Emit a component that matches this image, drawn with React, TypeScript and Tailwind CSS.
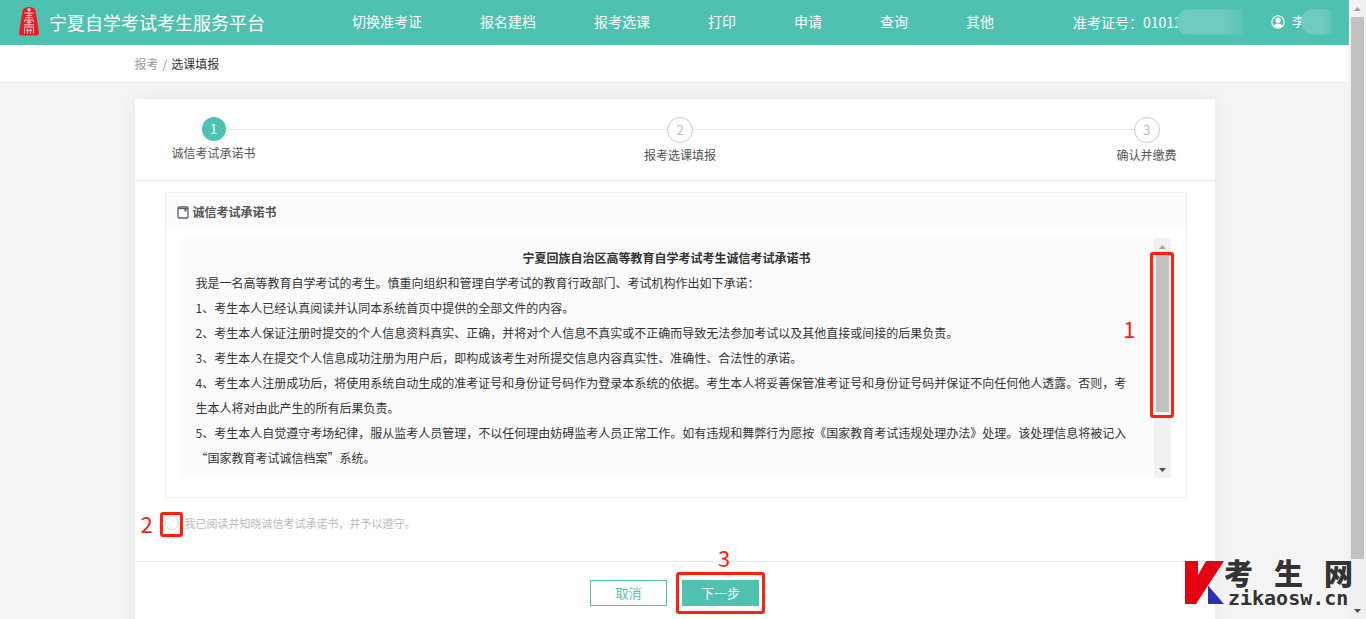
import type { ReactNode } from "react";

const navLinks = ["切换准考证", "报名建档", "报考选课", "打印", "申请", "查询", "其他"];

const steps = ["诚信考试承诺书", "报考选课填报", "确认并缴费"];

const pledge = [
  "我是一名高等教育自学考试的考生。慎重向组织和管理自学考试的教育行政部门、考试机构作出如下承诺：",
  "1、考生本人已经认真阅读并认同本系统首页中提供的全部文件的内容。",
  "2、考生本人保证注册时提交的个人信息资料真实、正确，并将对个人信息不真实或不正确而导致无法参加考试以及其他直接或间接的后果负责。",
  "3、考生本人在提交个人信息成功注册为用户后，即构成该考生对所提交信息内容真实性、准确性、合法性的承诺。",
  "4、考生本人注册成功后，将使用系统自动生成的准考证号和身份证号码作为登录本系统的依据。考生本人将妥善保管准考证号和身份证号码并保证不向任何他人透露。否则，考生本人将对由此产生的所有后果负责。",
  "5、考生本人自觉遵守考场纪律，服从监考人员管理，不以任何理由妨碍监考人员正常工作。如有违规和舞弊行为愿按《国家教育考试违规处理办法》处理。该处理信息将被记入“国家教育考试诚信档案”系统。",
];

function SealLogo() {
  return (
    <svg width="20" height="29" viewBox="0 0 20 29" aria-hidden="true">
      <path d="M3.5 3.5 Q4.5 0 10 0 Q15.5 0 16.5 3.5 L20 26 Q20 28.5 18 28.5 H2 Q0 28.5 0 26 Z" fill="#ed1c24" />
      <circle cx="10" cy="2.8" r="1.6" fill="#fff" />
      <path
        d="M5.5 6H14.5M7 8.5H13M6 10.7H14M10 6V12.5M5.5 13H14.5M5.5 13V15.2M14.5 13V15.2M7.5 15.2H12.5M5 17.8H15M10 13V19.8M5.5 20V26.6M5.5 20H14.5V26.6M8.5 21.5V26.6M11.5 21.5V26.6M7 23.3H13"
        stroke="#ffd0d0"
        strokeWidth="1"
        fill="none"
      />
    </svg>
  );
}

function UserIcon() {
  return (
    <svg width="14" height="14" viewBox="0 0 14 14" aria-hidden="true">
      <circle cx="7" cy="7" r="6.2" fill="none" stroke="#fff" strokeWidth="1.1" />
      <circle cx="7" cy="5.2" r="2.6" fill="#fff" />
      <path d="M2.6 10.6 Q4 8.5 7 8.5 Q10 8.5 11.4 10.6 Q9.8 12.8 7 12.8 Q4.2 12.8 2.6 10.6Z" fill="#fff" />
    </svg>
  );
}

function NoteIcon() {
  return (
    <svg width="12" height="13" viewBox="0 0 12 13" aria-hidden="true">
      <rect x="1" y="1" width="10" height="11" rx="1" fill="none" stroke="#5f5f6e" strokeWidth="1.3" />
      <path d="M1 2.6H11" stroke="#5f5f6e" strokeWidth="1.2" />
      <path d="M7.5 3H9.5V6L8.5 5.2L7.5 6Z" fill="#5f5f6e" />
    </svg>
  );
}

function ArrowButton({ label, down, dark }: { label: string; down?: boolean; dark?: boolean }) {
  return (
    <button aria-label={label} className="flex h-[17px] w-[17px] shrink-0 items-center justify-center">
      <svg width="7" height="4" viewBox="0 0 7 4" aria-hidden="true">
        <path d={down ? "M0 0H7L3.5 4Z" : "M0 4H7L3.5 0Z"} fill={dark ? "#505050" : "#a3a3a3"} />
      </svg>
    </button>
  );
}

function ScrollBar({ children }: { children: ReactNode }) {
  return (
    <div className="flex w-[17px] shrink-0 flex-col items-center bg-[#f1f1f1]">
      <ArrowButton label="向上滚动" />
      <div className="flex w-full flex-1 flex-col items-center">{children}</div>
      <ArrowButton label="向下滚动" down dark />
    </div>
  );
}

function Header() {
  return (
    <header className="flex h-[45px] items-center bg-[#4fc1b1] pr-[17px] pb-0.5 pl-[19px] text-sm text-white">
      <SealLogo />
      <h1 className="ml-2.5 text-lg whitespace-nowrap">宁夏自学考试考生服务平台</h1>
      <nav className="ml-[87px] flex gap-[58px] pb-0.5 whitespace-nowrap">
        {navLinks.map((name) => (
          <a key={name} href="#">
            {name}
          </a>
        ))}
      </nav>
      <div className="ml-auto flex items-center whitespace-nowrap">
        <span className="relative w-[170px]">
          准考证号：01012
          <MaskBlock className="right-0 h-[25px] w-[67px]" />
        </span>
        <a href="#" className="relative ml-7 flex w-[61px] items-center gap-[7px] text-[13px]">
          <UserIcon />
          李
          <MaskBlock className="right-0 h-[25px] w-[31px]" />
        </a>
      </div>
    </header>
  );
}

function MaskBlock({ className }: { className: string }) {
  return (
    <span
      className={`absolute top-1/2 -translate-y-1/2 rounded-l-full bg-linear-to-r from-[#6fcbbe] from-70% to-[#58c4b5] ${className}`}
    />
  );
}

function Steps() {
  return (
    <div className="border-b border-[#e8e8e8] pt-[18px] pr-[26px] pb-[15px] pl-[37px]">
      <ol className="relative flex justify-between">
        <li aria-hidden="true" className="absolute top-3 right-[42px] left-[42px] h-px bg-[#e8e8e8]" />
        {steps.map((name, i) => (
          <li key={name} className="relative flex w-[84px] flex-col items-center text-xs text-[#555]">
            {i === 0 ? (
              <span className="flex size-6 items-center justify-center rounded-full bg-[#4fc1b1] text-[13px] text-white ring-1 ring-white">
                {i + 1}
              </span>
            ) : (
              <span className="flex size-[26px] items-center justify-center rounded-full border border-[#c8ccd0] bg-white text-[13px] text-[#bbbec4]">
                {i + 1}
              </span>
            )}
            <span className="mt-0.5 leading-5 whitespace-nowrap">{name}</span>
          </li>
        ))}
      </ol>
    </div>
  );
}

function PledgePanel() {
  return (
    <section className="mt-[11px] mr-7 ml-[30px] border border-[#f0f0f0]">
      <h2 className="flex h-9 items-center gap-1 bg-[#fcfcfc] px-[11px] pt-0.5 text-xs font-bold text-[#555]">
        <NoteIcon />
        诚信考试承诺书
      </h2>
      <div className="mx-[15px] mt-[9px] mb-[19px] flex">
        <div className="h-60 flex-1 overflow-hidden bg-[#fcfcfc] pt-[7px] pr-4 pl-[15px] text-xs leading-[25px] text-[#333]">
          <h3 className="text-center font-bold">宁夏回族自治区高等教育自学考试考生诚信考试承诺书</h3>
          {pledge.map((line) => (
            <p key={line}>{line}</p>
          ))}
        </div>
        <ScrollBar>
          <div className="relative h-[157px] w-[13px] bg-[#c1c1c1]">
            <Mark className="-top-[3px] -right-[5px] -bottom-[6px] -left-[6px]" />
            <MarkNumber className="top-[61px] right-[33px]">1</MarkNumber>
          </div>
        </ScrollBar>
      </div>
    </section>
  );
}

function Mark({ className }: { className: string }) {
  return <span className={`pointer-events-none absolute rounded-[3px] border-3 border-[#ff2010] ${className}`} />;
}

function MarkNumber({ className, children }: { className: string; children: ReactNode }) {
  return <span className={`absolute text-[22px] leading-6 text-[#ff2010] ${className}`}>{children}</span>;
}

function SiteBadge() {
  return (
    <div className="absolute right-[13px] bottom-3 flex text-[#333]">
      <svg width="40" height="44" viewBox="0 0 40 44" aria-hidden="true">
        <path d="M1 0H14V14L22 0H40L12 43H1Z" fill="#e60012" />
        <path d="M24 24.5L40 43H24Z" fill="#2b2fb8" />
      </svg>
      <div className="-mt-1.5">
        <div className="flex gap-[21px] text-[29px] leading-[34px] font-black">
          <span>考</span>
          <span>生</span>
          <span>网</span>
        </div>
        <div className="ml-1 font-['DejaVu_Sans_Mono',monospace] text-xl leading-[18px] font-bold">zikaosw.cn</div>
      </div>
    </div>
  );
}

export default function App() {
  return (
    <div
      lang="zh-CN"
      className="relative flex h-screen overflow-hidden bg-[#f4f4f4] font-['Noto_Sans_CJK_SC',sans-serif]"
    >
      <div className="min-w-0 flex-1">
        <Header />
        <div className="bg-white">
          <div className="mx-auto flex h-9 max-w-[1080px] items-center gap-1 pt-0.5 text-xs text-[#333]">
            <a href="#" className="text-[#999]">
              报考
            </a>
            <span className="text-[#888]">/</span>
            <span>选课填报</span>
          </div>
        </div>

        <main className="mx-auto mt-[18px] max-w-[1080px] bg-white pb-10 shadow-[0_0_16px_rgba(0,0,0,0.06)]">
          <Steps />
          <PledgePanel />

          <div className="mt-[15px] flex border-b border-[#e8e8e8] pb-7 pl-[30px]">
            <label className="relative flex items-center gap-1.5 text-[11px] leading-5 text-[#bbb]">
              <input type="radio" name="agree" className="size-3.5 appearance-none rounded-full border border-[#d4d4d4]" />
              我已阅读并知晓诚信考试承诺书，并予以遵守。
              <Mark className="-top-px -left-[5px] h-[25px] w-[23px]" />
              <MarkNumber className="-top-0.5 -left-6">2</MarkNumber>
            </label>
          </div>

          <div className="flex justify-center gap-[15px] pt-[18px] text-[13px]">
            <button className="h-[26px] w-[77px] border border-[#4fc1b1] bg-white text-[#4fc1b1]">取消</button>
            <div className="relative">
              <button className="h-[26px] w-[77px] bg-[#4fc1b1] text-white">下一步</button>
              <Mark className="-inset-x-[6px] -inset-y-2" />
              <MarkNumber className="-top-[35px] left-9">3</MarkNumber>
            </div>
          </div>
        </main>
      </div>

      <ScrollBar>
        <div className="h-[542px] w-[13px] bg-[#c1c1c1]" />
      </ScrollBar>
      <SiteBadge />
    </div>
  );
}
